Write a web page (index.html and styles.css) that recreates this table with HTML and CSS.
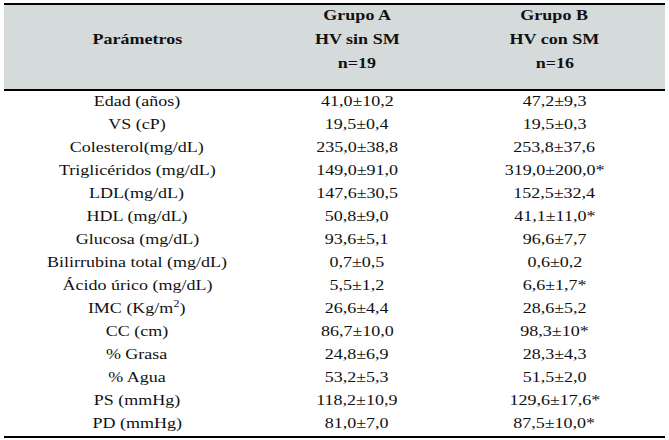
FILE: index.html
```html
<!DOCTYPE html>
<html lang="es">
<head>
<meta charset="utf-8">
<title>Parámetros</title>
<link rel="stylesheet" href="styles.css">
</head>
<body>
<table class="t">
  <colgroup><col class="c1"><col class="c2"><col class="c3"></colgroup>
  <thead>
    <tr>
      <th><div class="hp"><span class="s">Parámetros</span></div></th>
      <th><div class="hl"><span class="s">Grupo A</span></div><div><span class="s">HV sin SM</span></div><div><span class="s">n=19</span></div></th>
      <th><div class="hl"><span class="s">Grupo B</span></div><div><span class="s">HV con SM</span></div><div><span class="s">n=16</span></div></th>
    </tr>
  </thead>
  <tbody>
    <tr><td><span class="s">Edad (años)</span></td><td><span class="s">41,0±10,2</span></td><td><span class="s">47,2±9,3</span></td></tr>
    <tr><td><span class="s">VS (cP)</span></td><td><span class="s">19,5±0,4</span></td><td><span class="s">19,5±0,3</span></td></tr>
    <tr><td><span class="s">Colesterol(mg/dL)</span></td><td><span class="s">235,0±38,8</span></td><td><span class="s">253,8±37,6</span></td></tr>
    <tr><td><span class="s">Triglicéridos (mg/dL)</span></td><td><span class="s">149,0±91,0</span></td><td><span class="s">319,0±200,0*</span></td></tr>
    <tr><td><span class="s">LDL(mg/dL)</span></td><td><span class="s">147,6±30,5</span></td><td><span class="s">152,5±32,4</span></td></tr>
    <tr><td><span class="s">HDL (mg/dL)</span></td><td><span class="s">50,8±9,0</span></td><td><span class="s">41,1±11,0*</span></td></tr>
    <tr><td><span class="s">Glucosa (mg/dL)</span></td><td><span class="s">93,6±5,1</span></td><td><span class="s">96,6±7,7</span></td></tr>
    <tr><td><span class="s">Bilirrubina total (mg/dL)</span></td><td><span class="s">0,7±0,5</span></td><td><span class="s">0,6±0,2</span></td></tr>
    <tr><td><span class="s">Ácido úrico (mg/dL)</span></td><td><span class="s">5,5±1,2</span></td><td><span class="s">6,6±1,7*</span></td></tr>
    <tr><td><span class="s">IMC (Kg/m<sup>2</sup>)</span></td><td><span class="s">26,6±4,4</span></td><td><span class="s">28,6±5,2</span></td></tr>
    <tr><td><span class="s">CC (cm)</span></td><td><span class="s">86,7±10,0</span></td><td><span class="s">98,3±10*</span></td></tr>
    <tr><td><span class="s">% Grasa</span></td><td><span class="s">24,8±6,9</span></td><td><span class="s">28,3±4,3</span></td></tr>
    <tr><td><span class="s">% Agua</span></td><td><span class="s">53,2±5,3</span></td><td><span class="s">51,5±2,0</span></td></tr>
    <tr><td><span class="s">PS (mmHg)</span></td><td><span class="s">118,2±10,9</span></td><td><span class="s">129,6±17,6*</span></td></tr>
    <tr><td><span class="s">PD (mmHg)</span></td><td><span class="s">81,0±7,0</span></td><td><span class="s">87,5±10,0*</span></td></tr>
  </tbody>
</table>
</body>
</html>
```
FILE: styles.css
```css
html, body {
  margin: 0;
  background: #ffffff;
}
body {
  padding: 3px 4px 0;
  font-family: "Liberation Serif", "Times New Roman", serif;
  color: #111111;
}
.t {
  border-collapse: collapse;
  table-layout: fixed;
  width: 661px;
  border-top: 2px solid #000;
  border-bottom: 2px solid #000;
}
.c1 { width: 266px; }
.c2 { width: 174px; }
.c3 { width: 221px; }
.s {
  display: inline-block;
  transform: scaleX(1.2);
  white-space: nowrap;
}
thead th {
  background: #d5dbdb;
  height: 84px;
  padding: 0;
  vertical-align: top;
  text-align: center;
  font-size: 15px;
  font-weight: bold;
  line-height: 24px;
  border-bottom: 2px solid #000;
}
.hl {
  margin-top: -2px;
}
.hp {
  margin-top: 22px;
}
tbody td {
  padding: 0 0 2px;
  height: 21px;
  text-align: center;
  font-size: 15px;
  line-height: 21px;
}
sup {
  font-size: 10px;
  line-height: 0;
  vertical-align: 6px;
}
```
